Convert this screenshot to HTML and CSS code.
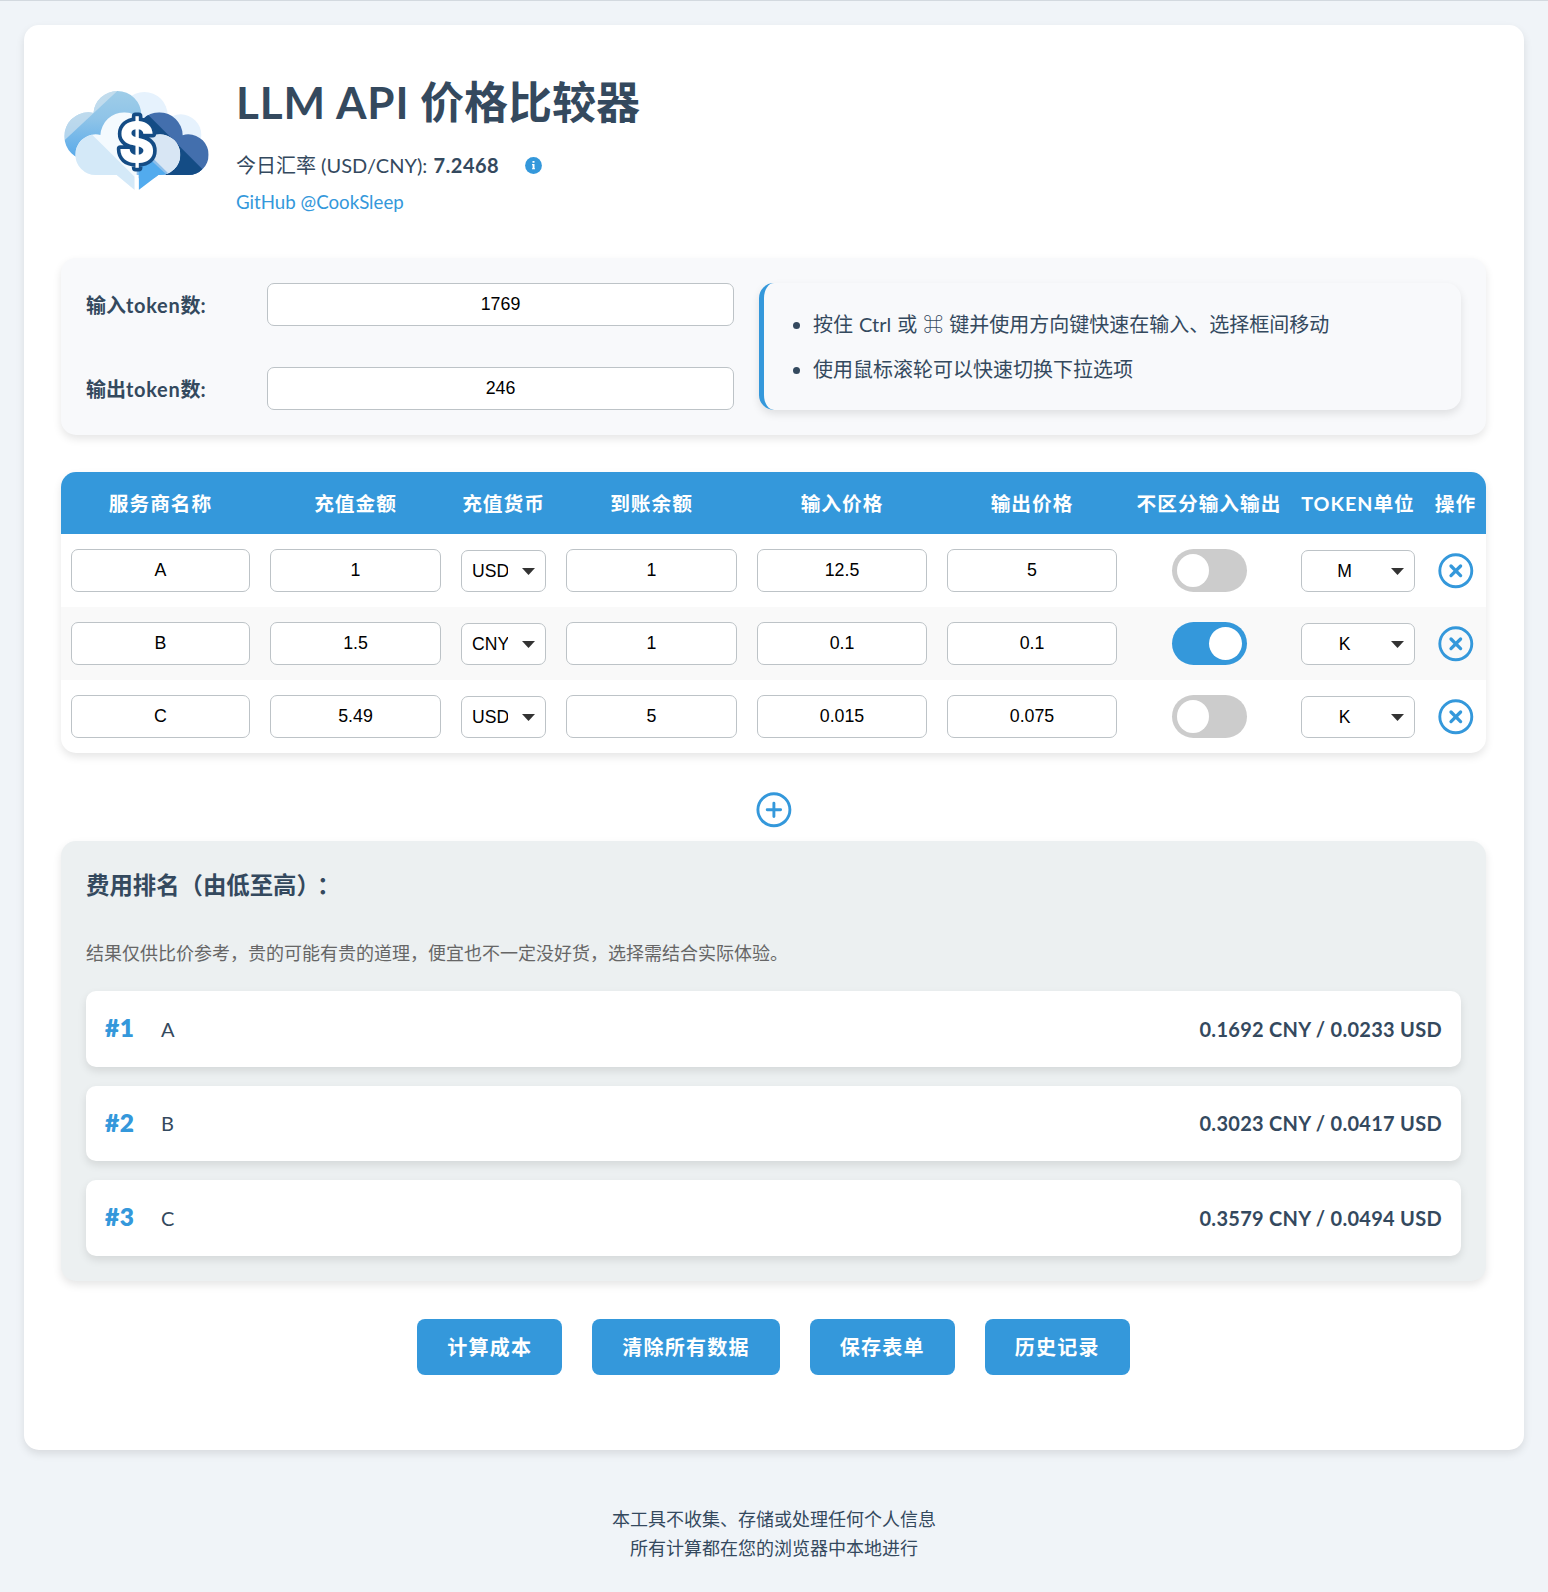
FILE: index.html
```html
<!DOCTYPE html>
<html lang="zh-CN">
<head>
<meta charset="utf-8">
<title>LLM API 价格比较器</title>
<link rel="stylesheet" href="styles.css">
</head>
<body>
<svg class="sprite" aria-hidden="true">
  <symbol id="icon-close" viewBox="0 0 36 36"><g fill="none" stroke="#3498db" stroke-linecap="round"><circle cx="17.8" cy="17.8" r="16" stroke-width="2.9"/><path d="M13 13l9.6 9.6M22.6 13l-9.6 9.6" stroke-width="3.3"/></g></symbol>
  <symbol id="icon-plus" viewBox="0 0 36 36"><g fill="none" stroke="#3498db" stroke-linecap="round"><circle cx="17.9" cy="17.8" r="16" stroke-width="2.9"/><path d="M17.9 11.1v13.4M11.2 17.8h13.4" stroke-width="2.9"/></g></symbol>
</svg>
<main class="card">
  <header class="header">
    <svg class="logo" viewBox="183 225 450 450">
      <defs>
        <linearGradient id="sky" x1="0" y1="273" x2="0" y2="480" gradientUnits="userSpaceOnUse"><stop offset="0" stop-color="#9fcde8"/><stop offset=".4" stop-color="#8fc4e8"/><stop offset="1" stop-color="#55a8ea"/></linearGradient>
        <clipPath id="back"><circle cx="352" cy="345" r="72"/><circle cx="265" cy="409" r="72"/><path d="M265 345h150v120H265z"/></clipPath>
        <clipPath id="right"><circle cx="478" cy="407" r="70"/><circle cx="565" cy="464" r="61"/><path d="M440 407h108v57h17v61H440z"/></clipPath>
        <clipPath id="front"><circle cx="373" cy="409" r="72"/><circle cx="287" cy="464" r="61"/><circle cx="480" cy="464" r="61"/><path d="M287 409h193v116h-5l-59 45V525h-12v45l-54-45h-63z"/></clipPath>
      </defs>
      <g fill="#e6f2fd"><circle cx="433" cy="346" r="70"/><circle cx="542" cy="405" r="62"/></g>
      <g clip-path="url(#back)"><path d="M190 270h240v210H190z" fill="url(#sky)"/><path d="M190 270h165L190 424z" fill="#d5e5ef" opacity=".65"/></g>
      <g clip-path="url(#right)"><path d="M400 330h230v200H400z" fill="#436fad"/><path d="M420 320l186 186v24H400z" fill="#144c85"/></g>
      <g clip-path="url(#front)"><path d="M220 330h225v245H220zM220 403h330v172H220z" fill="#f4fafe"/><path d="M275 403l129 127v45H220V403z" fill="#d4e9f8"/><path d="M430 400h115v130h-85z" fill="#d8e6f4"/><path d="M410 427l100 98v10H410z" fill="#8fbfea"/><path d="M416 480h36l50 46-27 50h-59z" fill="#52abee"/></g>
      <text class="logo-sign" x="410" y="487" text-anchor="middle">$</text>
    </svg>
    <div class="heading">
      <h1><span>LLM API</span> 价格比较器</h1>
      <p class="rate"><span>今日汇率 (USD/CNY): <b>7.2468</b></span>
        <svg class="info" viewBox="0 0 17 17"><circle cx="8.5" cy="8.5" r="8.4" fill="#3498db"/><path d="M7.5 4h2v1.8h-2zM7 7.1h2.5v4.1h.5v1.1H7v-1.1h.6V8.2H7z" fill="#fff"/></svg></p>
      <a class="github">GitHub @CookSleep</a>
    </div>
  </header>

  <section class="tokens panel">
    <div class="fields">
      <label for="in-tok">输入<span>token</span>数:</label><input id="in-tok" value="1769">
      <label for="out-tok">输出<span>token</span>数:</label><input id="out-tok" value="246">
    </div>
    <ul class="tips">
      <li>按住 Ctrl 或 ⌘ 键并使用方向键快速在输入、选择框间移动</li>
      <li>使用鼠标滚轮可以快速切换下拉选项</li>
    </ul>
  </section>

  <section class="table panel">
    <div class="row head"><span>服务商名称</span><span>充值金额</span><span>充值货币</span><span>到账余额</span><span>输入价格</span><span>输出价格</span><span>不区分输入输出</span><span>TOKEN单位</span><span>操作</span></div>
    <div class="row">
      <div><input value="A"></div><div><input value="1"></div><div class="pick"><select><option>USD</option></select></div><div><input value="1"></div><div><input value="12.5"></div><div><input value="5"></div><div><i class="switch"></i></div><div class="pick"><select><option>M</option></select></div><div><svg class="round"><use href="#icon-close"/></svg></div>
    </div>
    <div class="row">
      <div><input value="B"></div><div><input value="1.5"></div><div class="pick"><select><option>CNY</option></select></div><div><input value="1"></div><div><input value="0.1"></div><div><input value="0.1"></div><div><i class="switch on"></i></div><div class="pick"><select><option>K</option></select></div><div><svg class="round"><use href="#icon-close"/></svg></div>
    </div>
    <div class="row">
      <div><input value="C"></div><div><input value="5.49"></div><div class="pick"><select><option>USD</option></select></div><div><input value="5"></div><div><input value="0.015"></div><div><input value="0.075"></div><div><i class="switch"></i></div><div class="pick"><select><option>K</option></select></div><div><svg class="round"><use href="#icon-close"/></svg></div>
    </div>
  </section>

  <div class="add"><svg class="round"><use href="#icon-plus"/></svg></div>

  <section class="results panel">
    <h2>费用排名（由低至高）<span>：</span></h2>
    <p class="note">结果仅供比价参考，贵的可能有贵的道理，便宜也不一定没好货，选择需结合实际体验。</p>
    <div class="item"><b class="rank">#1</b><span>A</span><b class="cost">0.1692 CNY / 0.0233 USD</b></div>
    <div class="item"><b class="rank">#2</b><span>B</span><b class="cost">0.3023 CNY / 0.0417 USD</b></div>
    <div class="item"><b class="rank">#3</b><span>C</span><b class="cost">0.3579 CNY / 0.0494 USD</b></div>
  </section>

  <div class="actions"><button>计算成本</button><button>清除所有数据</button><button>保存表单</button><button>历史记录</button></div>
</main>
<footer>本工具不收集、存储或处理任何个人信息<br>所有计算都在您的浏览器中本地进行</footer>
</body>
</html>
```

FILE: styles.css
```css
* { box-sizing: border-box; }
body {
  margin: 0;
  min-height: 1592px;
  padding: 24px 24px 0;
  border-top: 1px solid #d3d9df;
  background: #f0f4f8;
  color: #34495e;
  font: 20px/32px Lato, "Noto Sans CJK SC", sans-serif;
}
h1, h2, p, ul { margin: 0; }
.sprite { display: none; }
.card {
  height: 1425px;
  padding: 50px 38px 0 37px;
  background: #fff;
  border-radius: 15px;
  box-shadow: 0 4px 8px rgba(0, 0, 0, .1);
}
.panel {
  border-radius: 15px;
  box-shadow: 0 4px 8px rgba(0, 0, 0, .1);
}

.header { display: flex; height: 183px; }
.logo { width: 150px; height: 150px; flex: none; }
.logo-sign {
  font: 800 166px Inter, sans-serif;
  fill: #fff;
  stroke: #144c85;
  stroke-width: 22px;
  stroke-linejoin: round;
  paint-order: stroke;
}
.heading { padding-left: 25px; }
h1 { margin-top: -2px; font-size: 44px; line-height: 58px; }
h1 span { letter-spacing: .85px; }
.rate { display: flex; align-items: center; margin-top: 18px; white-space: nowrap; }
.rate b { margin-left: 1px; letter-spacing: .5px; }
.info { width: 17px; height: 17px; margin-left: 26px; }
.github { display: block; margin-top: 5px; font-size: 18.7px; color: #3498db; }

.tokens { display: flex; gap: 25px; height: 177px; padding: 25px; background: #f8f9fb; }
.fields {
  display: grid;
  grid-template-columns: 181px 467px;
  row-gap: 41px;
  align-items: center;
}
.fields label { font-weight: 700; font-size: 20px; }
.fields label span { letter-spacing: .7px; }
input, select {
  width: 100%;
  height: 43px;
  margin: 0;
  padding: 0 10px;
  border: 1px solid #bdc3c7;
  border-radius: 7px;
  background: #fff;
  color: #000;
  font: 17.8px "Liberation Sans", Arial, sans-serif;
  text-align: center;
}
.tips {
  flex: 1;
  padding: 19px 0 0 49px;
  border-left: 5px solid #3498db;
  border-radius: 15px;
  box-shadow: 0 4px 8px rgba(0, 0, 0, .1);
}
.tips li { line-height: 45px; word-spacing: .9px; }

.table { margin-top: 37px; overflow: hidden; }
.row {
  display: grid;
  grid-template-columns: 199px 191px 105px 191px 190px 190px 164px 134px 61px;
  height: 73px;
  align-items: center;
  text-align: center;
}
.row:nth-child(odd):not(.head) { background: #f9f9f9; }
.row > div { display: flex; justify-content: center; padding: 0 10px; }
.row.head {
  height: 62px;
  padding-top: 1px;
  background: #3498db;
  color: #fff;
  font-weight: 700;
  font-size: 19.7px;
  letter-spacing: 1px;
  white-space: nowrap;
}
.row > .pick { position: relative; padding-top: 1px; }
.pick select { height: 42px; padding: 0 37px 1px 10px; font-size: 17.6px; appearance: none; }
.pick::after {
  content: "";
  position: absolute;
  right: 21px;
  top: 19px;
  width: 13px;
  height: 7px;
  background: #333;
  clip-path: polygon(0 0, 100% 0, 50% 100%);
}
.switch {
  width: 75px;
  height: 43px;
  padding: 5px;
  border-radius: 22px;
  background: #ccc;
}
.switch::before {
  content: "";
  display: block;
  width: 32px;
  height: 33px;
  border-radius: 50%;
  background: #fff;
}
.switch.on { background: #3498db; }
.switch.on::before { width: 33px; margin-left: 32px; }
.round { display: block; width: 36px; height: 36px; flex: none; }

.add { display: flex; justify-content: center; height: 88px; padding-top: 39px; }

.results { height: 440px; padding: 25px; background: #ecf0f1; }
h2 { font-size: 23.4px; line-height: 38px; text-spacing-trim: space-all; }
h2 span { margin-left: -3px; }
.note { margin: 34px 0 22px; font-size: 18px; line-height: 31px; color: #666; }
.item {
  display: flex;
  align-items: center;
  height: 75.6px;
  margin-bottom: 19px;
  padding: 0 19px;
  border-radius: 10px;
  background: #fff;
  box-shadow: 0 4px 8px rgba(0, 0, 0, .1);
}
.rank { width: 56px; padding-bottom: 1px; font-size: 24.5px; font-weight: 800; letter-spacing: .5px; color: #3498db; }
.cost { margin-left: auto; letter-spacing: .28px; }

.actions { display: flex; justify-content: center; gap: 30px; margin-top: 38px; }
button {
  height: 56px;
  padding: 0 30px 2px;
  border: 0;
  border-radius: 8px;
  background: #3498db;
  color: #fff;
  font: 700 20px Lato, "Noto Sans CJK SC", sans-serif;
  letter-spacing: 1.25px;
}
footer { margin-top: 55px; font-size: 18px; line-height: 29px; text-align: center; }
```
